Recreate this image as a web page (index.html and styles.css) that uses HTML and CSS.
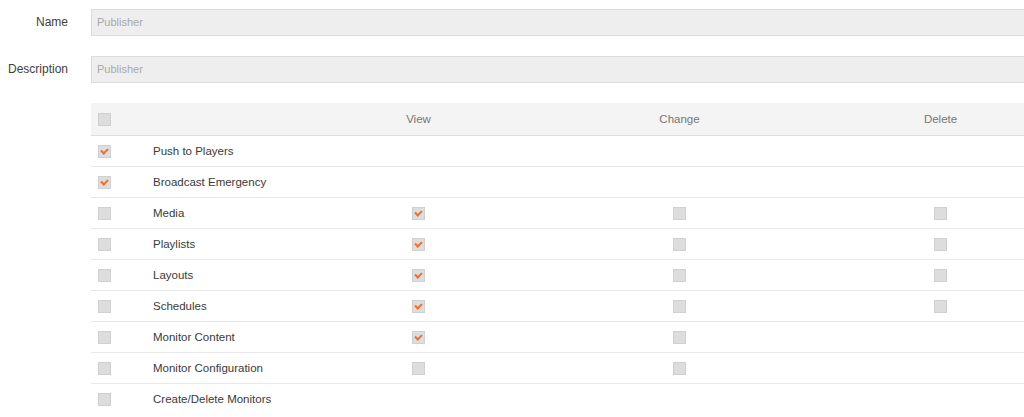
FILE: index.html
```html
<!DOCTYPE html>
<html>
<head>
<meta charset="utf-8">
<link rel="stylesheet" href="styles.css">
</head>
<body>
<div class="page">
  <div class="field">
    <label class="label">Name</label>
    <div class="input">Publisher</div>
  </div>
  <div class="field">
    <label class="label">Description</label>
    <div class="input">Publisher</div>
  </div>
  <div class="field">
    <div class="label"></div>
    <div class="table-wrap">
    <table class="perm">
      <colgroup>
        <col class="c-check"><col class="c-name"><col class="c-op"><col class="c-op"><col class="c-op">
      </colgroup>
      <thead>
        <tr>
          <th class="left"><span class="cb"></span></th>
          <th></th>
          <th>View</th>
          <th>Change</th>
          <th>Delete</th>
        </tr>
      </thead>
      <tbody>
        <tr><td class="left"><span class="cb on"></span></td><td class="name">Push to Players</td><td></td><td></td><td></td></tr>
        <tr><td class="left"><span class="cb on"></span></td><td class="name">Broadcast Emergency</td><td></td><td></td><td></td></tr>
        <tr><td class="left"><span class="cb"></span></td><td class="name">Media</td><td><span class="cb on"></span></td><td><span class="cb"></span></td><td><span class="cb"></span></td></tr>
        <tr><td class="left"><span class="cb"></span></td><td class="name">Playlists</td><td><span class="cb on"></span></td><td><span class="cb"></span></td><td><span class="cb"></span></td></tr>
        <tr><td class="left"><span class="cb"></span></td><td class="name">Layouts</td><td><span class="cb on"></span></td><td><span class="cb"></span></td><td><span class="cb"></span></td></tr>
        <tr><td class="left"><span class="cb"></span></td><td class="name">Schedules</td><td><span class="cb on"></span></td><td><span class="cb"></span></td><td><span class="cb"></span></td></tr>
        <tr><td class="left"><span class="cb"></span></td><td class="name">Monitor Content</td><td><span class="cb on"></span></td><td><span class="cb"></span></td><td></td></tr>
        <tr><td class="left"><span class="cb"></span></td><td class="name">Monitor Configuration</td><td><span class="cb"></span></td><td><span class="cb"></span></td><td></td></tr>
        <tr><td class="left"><span class="cb"></span></td><td class="name">Create/Delete Monitors</td><td></td><td></td><td></td></tr>
      </tbody>
    </table>
    </div>
  </div>
</div>
</body>
</html>
```
FILE: styles.css
```css
html, body {
  margin: 0;
  padding: 0;
  overflow: hidden;
  background: #fff;
}
body {
  font-family: "Liberation Sans", Arial, sans-serif;
  color: #444;
  font-size: 12px;
}
.page {
  width: 1024px;
  padding-top: 9px;
  overflow: hidden;
}
.field {
  display: flex;
  align-items: flex-start;
  gap: 23px;
  margin-bottom: 20px;
}
.label {
  width: 68px;
  flex: none;
  text-align: right;
  font-size: 12px;
  color: #3e3e3e;
  line-height: 27px;
}
.input {
  flex: 1;
  min-width: 0;
  height: 25px;
  border: 1px solid #dcdcdc;
  border-right: none;
  background: #eeeeee;
  color: #a8a8a8;
  font-size: 11px;
  line-height: 25px;
  padding-left: 5px;
}
.table-wrap {
  flex: 1;
  min-width: 0;
  overflow: hidden;
}
.perm {
  width: 980px;
  table-layout: fixed;
  border-collapse: collapse;
}
.c-check { width: 54px; }
.c-name { width: 143px; }
.c-op { width: 261px; }
.perm thead th {
  height: 32px;
  background: #f4f4f4;
  border-bottom: 1px solid #dddddd;
  font-weight: normal;
  color: #777;
  font-size: 11.5px;
  text-align: center;
  padding: 0;
  vertical-align: middle;
}
.perm td {
  height: 30px;
  border-bottom: 1px solid #e8e8e8;
  text-align: center;
  padding: 0;
  vertical-align: middle;
}
.perm tbody tr:last-child td {
  border-bottom: none;
}
.perm .left {
  text-align: left;
  padding-left: 7px;
}
.perm td.name {
  text-align: left;
  padding-left: 8px;
  color: #3a3a3a;
  font-size: 11.5px;
}
.cb {
  display: inline-block;
  width: 11px;
  height: 11px;
  background: #dddddd;
  border: 1px solid #d0d0d0;
  vertical-align: middle;
  position: relative;
}
.cb.on::after {
  content: "";
  position: absolute;
  left: 2px;
  top: 2px;
  width: 5px;
  height: 3px;
  border-left: 2px solid #f0702a;
  border-bottom: 2px solid #f0702a;
  transform: rotate(-45deg);
}
```
